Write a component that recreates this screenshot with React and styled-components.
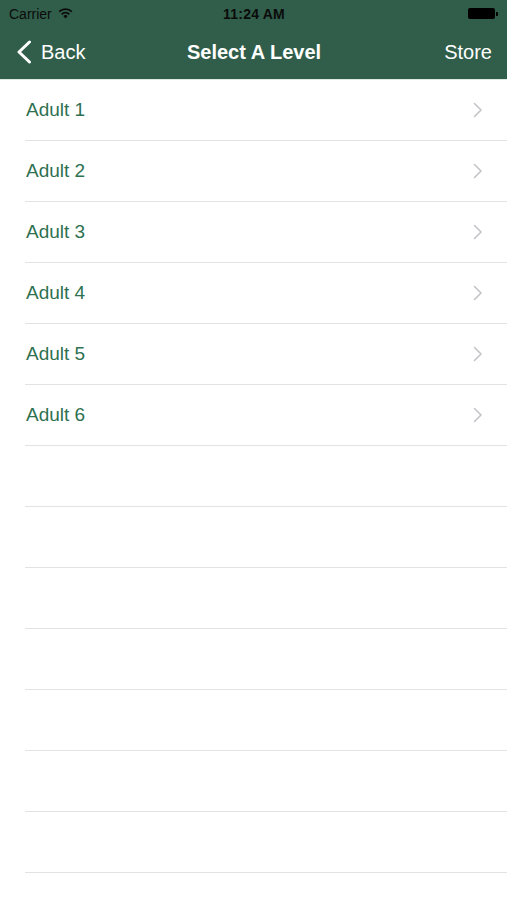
import styled, { createGlobalStyle } from "styled-components";

const GlobalStyle = createGlobalStyle`
  html, body {
    margin: 0;
    padding: 0;
    background: #ffffff;
  }
  body {
    font-family: "Liberation Sans", Arial, sans-serif;
  }
`;

const Screen = styled.div`
  width: 507px;
  height: 900px;
  overflow: hidden;
  background: #ffffff;
  display: flex;
  flex-direction: column;
`;

const Header = styled.header`
  background: #305e4a;
  height: 79px;
  border-bottom: 1px solid #dfe9e4;
  display: flex;
  flex-direction: column;
  flex-shrink: 0;
`;

const StatusBar = styled.div`
  height: 27px;
  display: grid;
  grid-template-columns: 1fr auto 1fr;
  align-items: center;
  padding: 0 8px 0 9px;
  color: #0b0b0b;
  font-size: 14px;
`;

const Carrier = styled.div`
  display: flex;
  align-items: center;
  gap: 6px;
`;

const Time = styled.div`
  font-weight: bold;
  letter-spacing: 0.2px;
`;

const Battery = styled.div`
  justify-self: end;
  display: flex;
  align-items: center;
  margin-right: 1px;
`;

const BatteryBody = styled.div`
  width: 27px;
  height: 11px;
  border-radius: 2px;
  background: #000;
`;

const BatteryTip = styled.div`
  width: 2px;
  height: 4px;
  margin-left: 1px;
  border-radius: 0 1px 1px 0;
  background: #000;
`;

const NavBar = styled.div`
  flex: 1;
  display: grid;
  grid-template-columns: 1fr auto 1fr;
  align-items: center;
  padding: 0 15px 2px 16px;
  color: #ffffff;
  font-size: 20px;
`;

const BackButton = styled.div`
  display: flex;
  align-items: center;
  gap: 9px;
`;

const Title = styled.div`
  font-weight: bold;
`;

const StoreButton = styled.div`
  justify-self: end;
`;

const List = styled.div`
  display: flex;
  flex-direction: column;
`;

const Row = styled.div`
  height: 61px;
  flex-shrink: 0;
  margin-left: 25px;
  padding: 0 24px 0 1px;
  display: flex;
  align-items: center;
  justify-content: space-between;
  border-bottom: 1px solid #e3e3e5;
  box-sizing: border-box;
`;

const RowLabel = styled.span`
  color: #2e7151;
  font-size: 19px;
`;

const WifiIcon = () => (
  <svg width="15" height="11" viewBox="0 0 15 11">
    <path d="M7.5 10.5 L5.3 8.1 A3.2 3.2 0 0 1 9.7 8.1 Z" fill="#0b0b0b" />
    <path
      d="M3.6 6.3 A5.6 5.6 0 0 1 11.4 6.3"
      stroke="#0b0b0b"
      strokeWidth="1.8"
      fill="none"
    />
    <path
      d="M1.2 3.7 A9 9 0 0 1 13.8 3.7"
      stroke="#0b0b0b"
      strokeWidth="1.8"
      fill="none"
    />
  </svg>
);

const BackChevron = () => (
  <svg width="16" height="24" viewBox="0 0 16 24">
    <path
      d="M13.5 2 L3 12 L13.5 22"
      stroke="#ffffff"
      strokeWidth="3"
      strokeLinecap="round"
      strokeLinejoin="round"
      fill="none"
    />
  </svg>
);

const Disclosure = () => (
  <svg width="10" height="16" viewBox="0 0 10 16">
    <path
      d="M1.5 1.5 L8 8 L1.5 14.5"
      stroke="#c4c4c8"
      strokeWidth="1.6"
      strokeLinecap="round"
      strokeLinejoin="round"
      fill="none"
    />
  </svg>
);

const levels = ["Adult 1", "Adult 2", "Adult 3", "Adult 4", "Adult 5", "Adult 6"];
const emptyRows = 8;

const App = () => {
  return (
    <>
      <GlobalStyle />
      <Screen>
        <Header>
          <StatusBar>
            <Carrier>
              Carrier <WifiIcon />
            </Carrier>
            <Time>11:24 AM</Time>
            <Battery>
              <BatteryBody />
              <BatteryTip />
            </Battery>
          </StatusBar>
          <NavBar>
            <BackButton>
              <BackChevron />
              Back
            </BackButton>
            <Title>Select A Level</Title>
            <StoreButton>Store</StoreButton>
          </NavBar>
        </Header>
        <List>
          {levels.map((level) => (
            <Row key={level}>
              <RowLabel>{level}</RowLabel>
              <Disclosure />
            </Row>
          ))}
          {Array.from({ length: emptyRows }).map((_, i) => (
            <Row key={"empty-" + i} />
          ))}
        </List>
      </Screen>
    </>
  );
};

export default App;
